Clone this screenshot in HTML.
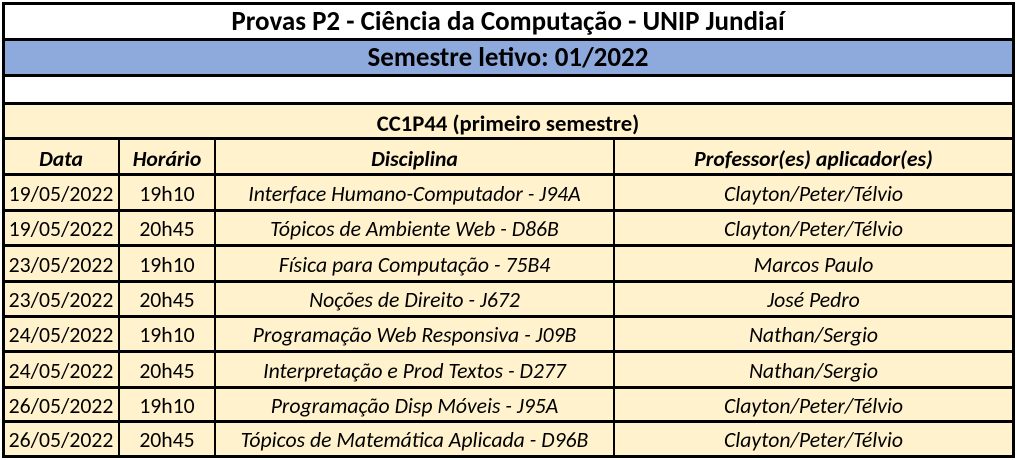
<!DOCTYPE html>
<html><head><meta charset="utf-8"><style>
body{margin:0;width:1017px;height:460px;background:#fff;position:relative;overflow:hidden;font-family:Calibri,Carlito,"Liberation Sans",sans-serif;}
.r{position:absolute;left:3px;width:1010px;box-sizing:border-box;}
.c{position:absolute;top:0;height:100%;display:flex;align-items:center;justify-content:center;font-size:21.7px;color:#000;white-space:nowrap;}
.hl{position:absolute;left:3px;width:1011px;height:3px;background:#000;}
.vl{position:absolute;width:2px;background:#000;}
</style></head><body>
<div class="r" style="top:3px;height:36px;background:#fff"><div class="c" style="left:0;width:100%;font-weight:bold;font-size:27px">Provas P2 - Ciência da Computação - UNIP Jundiaí</div></div>
<div class="r" style="top:39px;height:36px;background:#8EA9DB"><div class="c" style="left:0;width:100%;font-weight:bold;font-size:27px">Semestre letivo: 01/2022</div></div>
<div class="r" style="top:75px;height:28px;background:#fff"></div>
<div class="r" style="top:103px;height:353px;background:#FFF2CC"></div>
<div class="r" style="top:107px;height:34px"><div class="c" style="left:0;width:100%;font-weight:bold;font-size:22.7px">CC1P44 (primeiro semestre)</div></div>
<div class="hl" style="top:2px"></div>
<div class="hl" style="top:38px"></div>
<div class="hl" style="top:74px"></div>
<div class="hl" style="top:102px"></div>
<div class="hl" style="top:137px"></div>
<div class="hl" style="top:173px"></div>
<div class="hl" style="top:209px"></div>
<div class="hl" style="top:244px"></div>
<div class="hl" style="top:280px"></div>
<div class="hl" style="top:315px"></div>
<div class="hl" style="top:350px"></div>
<div class="hl" style="top:386px"></div>
<div class="hl" style="top:420px"></div>
<div class="hl" style="top:455px"></div>
<div class="vl" style="left:2px;top:2px;height:456px;width:3px"></div>
<div class="vl" style="left:1012px;top:2px;height:456px;width:3px"></div>
<div class="vl" style="left:118px;top:138px;height:320px"></div>
<div class="vl" style="left:214px;top:138px;height:320px"></div>
<div class="vl" style="left:613px;top:138px;height:320px"></div>
<div class="r" style="top:141px;height:34px;left:0;width:1017px">
<div class="c" style="left:4px;width:114px;font-weight:bold;font-style:italic">Data</div>
<div class="c" style="left:120px;width:94px;font-weight:bold;font-style:italic">Horário</div>
<div class="c" style="left:216px;width:397px;font-weight:bold;font-style:italic">Disciplina</div>
<div class="c" style="left:615px;width:397px;font-weight:bold;font-style:italic">Professor(es) aplicador(es)</div>
</div>
<div class="r" style="top:176px;height:34px;left:0;width:1017px"><div class="c" style="left:4px;width:114px">19/05/2022</div><div class="c" style="left:120px;width:94px">19h10</div><div class="c" style="left:216px;width:397px;font-style:italic">Interface Humano-Computador - J94A</div><div class="c" style="left:615px;width:397px;font-style:italic">Clayton/Peter/Télvio</div></div>
<div class="r" style="top:212px;height:33px;left:0;width:1017px"><div class="c" style="left:4px;width:114px">19/05/2022</div><div class="c" style="left:120px;width:94px">20h45</div><div class="c" style="left:216px;width:397px;font-style:italic">Tópicos de Ambiente Web - D86B</div><div class="c" style="left:615px;width:397px;font-style:italic">Clayton/Peter/Télvio</div></div>
<div class="r" style="top:247px;height:34px;left:0;width:1017px"><div class="c" style="left:4px;width:114px">23/05/2022</div><div class="c" style="left:120px;width:94px">19h10</div><div class="c" style="left:216px;width:397px;font-style:italic">Física para Computação - 75B4</div><div class="c" style="left:615px;width:397px;font-style:italic">Marcos Paulo</div></div>
<div class="r" style="top:283px;height:33px;left:0;width:1017px"><div class="c" style="left:4px;width:114px">23/05/2022</div><div class="c" style="left:120px;width:94px">20h45</div><div class="c" style="left:216px;width:397px;font-style:italic">Noções de Direito - J672</div><div class="c" style="left:615px;width:397px;font-style:italic">José Pedro</div></div>
<div class="r" style="top:318px;height:33px;left:0;width:1017px"><div class="c" style="left:4px;width:114px">24/05/2022</div><div class="c" style="left:120px;width:94px">19h10</div><div class="c" style="left:216px;width:397px;font-style:italic">Programação Web Responsiva - J09B</div><div class="c" style="left:615px;width:397px;font-style:italic">Nathan/Sergio</div></div>
<div class="r" style="top:353px;height:34px;left:0;width:1017px"><div class="c" style="left:4px;width:114px">24/05/2022</div><div class="c" style="left:120px;width:94px">20h45</div><div class="c" style="left:216px;width:397px;font-style:italic">Interpretação e Prod Textos - D277</div><div class="c" style="left:615px;width:397px;font-style:italic">Nathan/Sergio</div></div>
<div class="r" style="top:389px;height:32px;left:0;width:1017px"><div class="c" style="left:4px;width:114px">26/05/2022</div><div class="c" style="left:120px;width:94px">19h10</div><div class="c" style="left:216px;width:397px;font-style:italic">Programação Disp Móveis - J95A</div><div class="c" style="left:615px;width:397px;font-style:italic">Clayton/Peter/Télvio</div></div>
<div class="r" style="top:423px;height:33px;left:0;width:1017px"><div class="c" style="left:4px;width:114px">26/05/2022</div><div class="c" style="left:120px;width:94px">20h45</div><div class="c" style="left:216px;width:397px;font-style:italic">Tópicos de Matemática Aplicada - D96B</div><div class="c" style="left:615px;width:397px;font-style:italic">Clayton/Peter/Télvio</div></div>
</body></html>
